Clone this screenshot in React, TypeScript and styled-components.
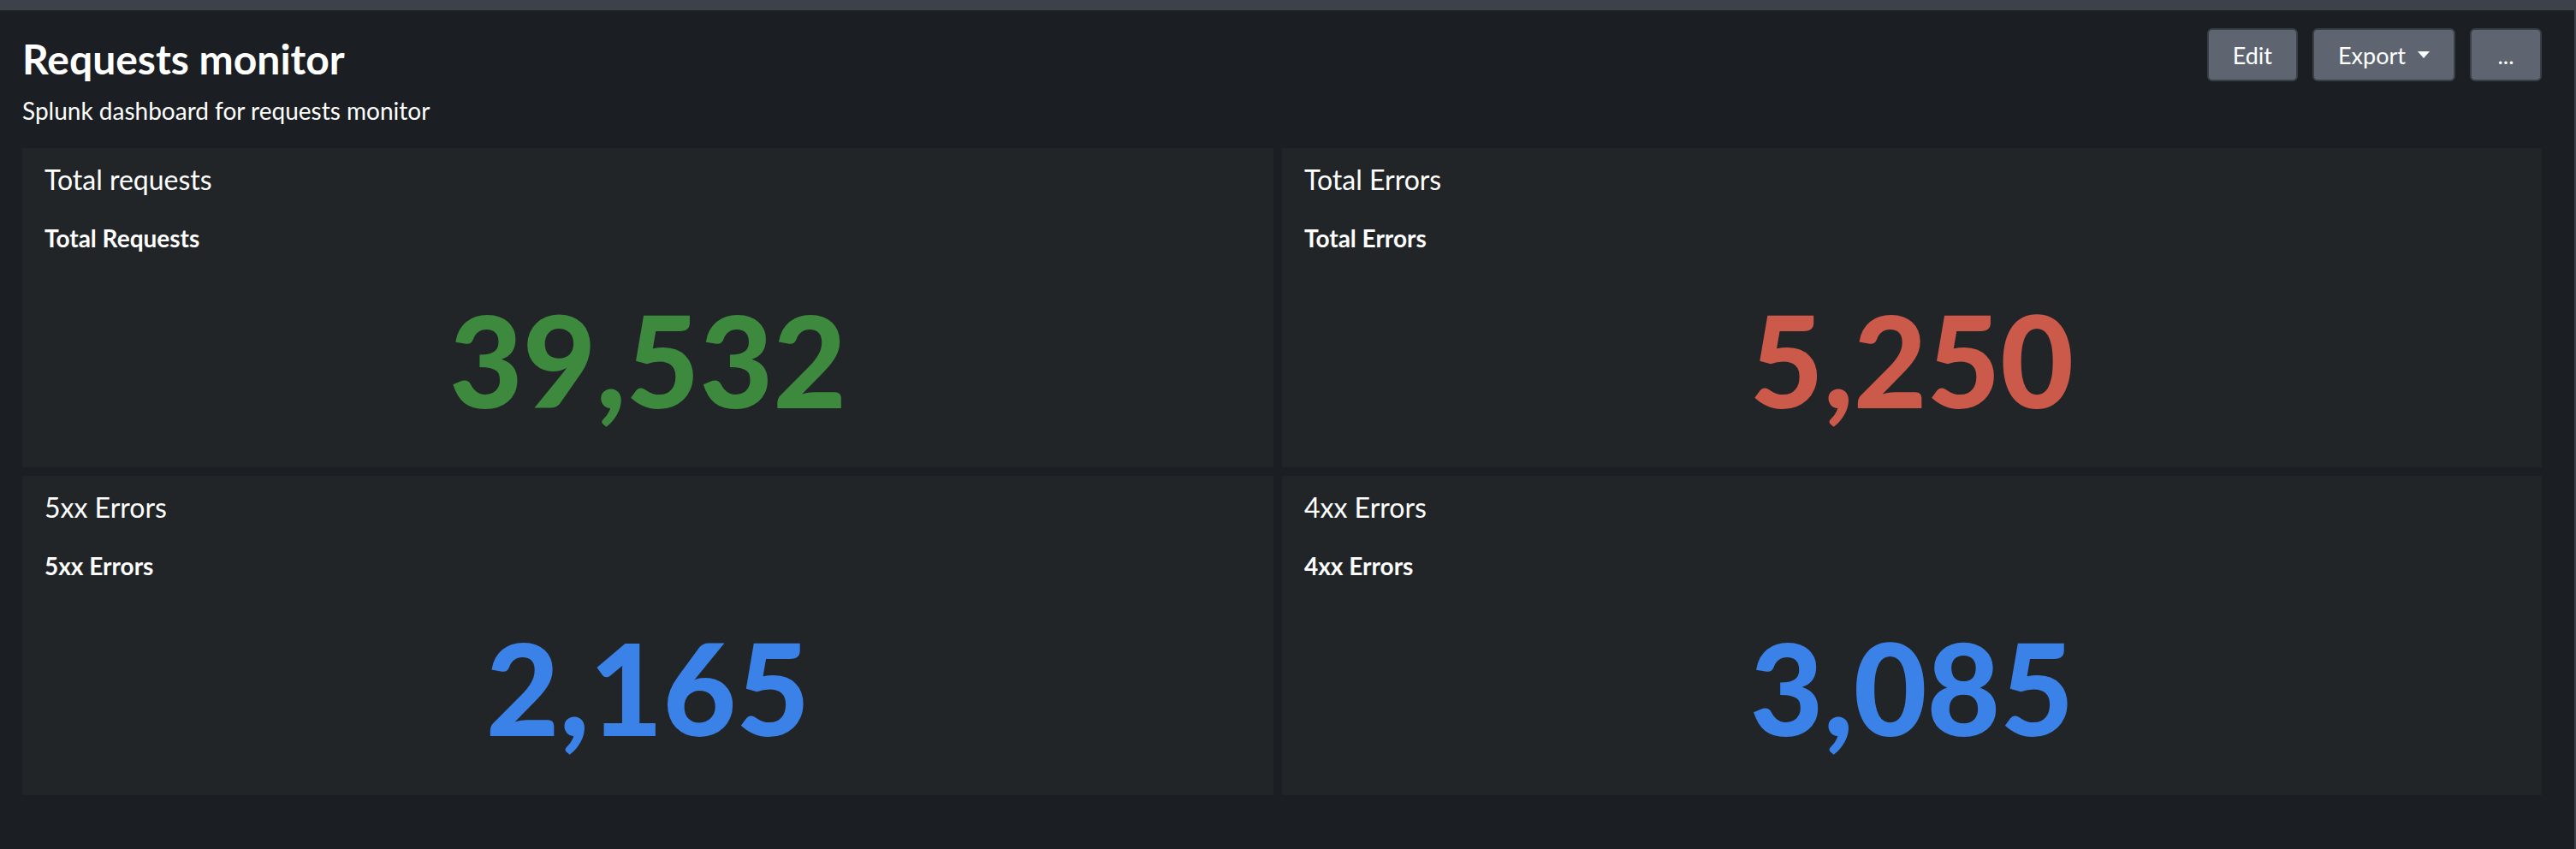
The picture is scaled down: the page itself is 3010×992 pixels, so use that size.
import React from "react";
import styled, { createGlobalStyle } from "styled-components";

const GlobalStyle = createGlobalStyle`
  html, body {
    margin: 0;
    padding: 0;
    background: #1b1e22;
  }
  body {
    font-family: Lato, "Noto Sans", sans-serif;
    -webkit-font-smoothing: antialiased;
  }
  * { box-sizing: border-box; }
`;

const Page = styled.div`
  width: 3010px;
  min-height: 992px;
  background: #1b1e22;
  border-top: 12px solid #3d424a;
  border-right: 2px solid #3d424a;
  padding: 0 38px 0 26px;
`;

const Header = styled.header`
  display: flex;
  justify-content: space-between;
  align-items: flex-start;
  padding-top: 21px;
`;

const TitleBlock = styled.div`
  padding-top: 8px;
`;

const Title = styled.h1`
  margin: 0;
  font-size: 48px;
  line-height: 56px;
  font-weight: 700;
  color: #ffffff;
`;

const Subtitle = styled.p`
  margin: 15px 0 0;
  font-size: 28px;
  line-height: 34px;
  font-weight: 400;
  color: #ffffff;
`;

const Actions = styled.div`
  display: flex;
  gap: 17px;
`;

const Button = styled.button<{ $square?: boolean }>`
  height: 62px;
  min-width: ${(p) => (p.$square ? "84px" : "0")};
  padding: 0 28px;
  display: inline-flex;
  align-items: center;
  justify-content: center;
  gap: 14px;
  background: #5e6570;
  border: 2px solid #393f47;
  border-radius: 6px;
  color: #ffffff;
  font-family: Lato, "Noto Sans", sans-serif;
  font-size: 27px;
  font-weight: 400;
  cursor: pointer;
`;

const Caret = styled.span`
  display: inline-block;
  width: 0;
  height: 0;
  border-left: 7px solid transparent;
  border-right: 7px solid transparent;
  border-top: 8px solid #ffffff;
`;

const Grid = styled.main`
  margin-top: 27px;
  display: grid;
  grid-template-columns: 1462fr 1472fr;
  grid-auto-rows: 373px;
  gap: 10px;
`;

const Panel = styled.section`
  background: #222528;
  padding: 17px 26px 0;
  display: flex;
  flex-direction: column;
`;

const PanelTitle = styled.h2`
  margin: 0;
  font-size: 32px;
  line-height: 40px;
  font-weight: 400;
  color: #ffffff;
`;

const ValueLabel = styled.div`
  margin-top: 31px;
  font-size: 28px;
  line-height: 34px;
  font-weight: 700;
  color: #ffffff;
`;

const BigValue = styled.div<{ $color: string }>`
  margin-top: 50px;
  align-self: center;
  font-size: 148px;
  line-height: 150px;
  font-weight: 900;
  color: ${(p) => p.$color};
`;

const panels = [
  { title: "Total requests", label: "Total Requests", value: "39,532", color: "#3d8a3e" },
  { title: "Total Errors", label: "Total Errors", value: "5,250", color: "#cc5a4b" },
  { title: "5xx Errors", label: "5xx Errors", value: "2,165", color: "#3b82e8" },
  { title: "4xx Errors", label: "4xx Errors", value: "3,085", color: "#3b82e8" },
];

export default function App() {
  return (
    <>
      <GlobalStyle />
      <Page>
        <Header>
          <TitleBlock>
            <Title>Requests monitor</Title>
            <Subtitle>Splunk dashboard for requests monitor</Subtitle>
          </TitleBlock>
          <Actions>
            <Button>Edit</Button>
            <Button>
              Export
              <Caret />
            </Button>
            <Button $square>...</Button>
          </Actions>
        </Header>
        <Grid>
          {panels.map((p) => (
            <Panel key={p.title}>
              <PanelTitle>{p.title}</PanelTitle>
              <ValueLabel>{p.label}</ValueLabel>
              <BigValue $color={p.color}>{p.value}</BigValue>
            </Panel>
          ))}
        </Grid>
      </Page>
    </>
  );
}
